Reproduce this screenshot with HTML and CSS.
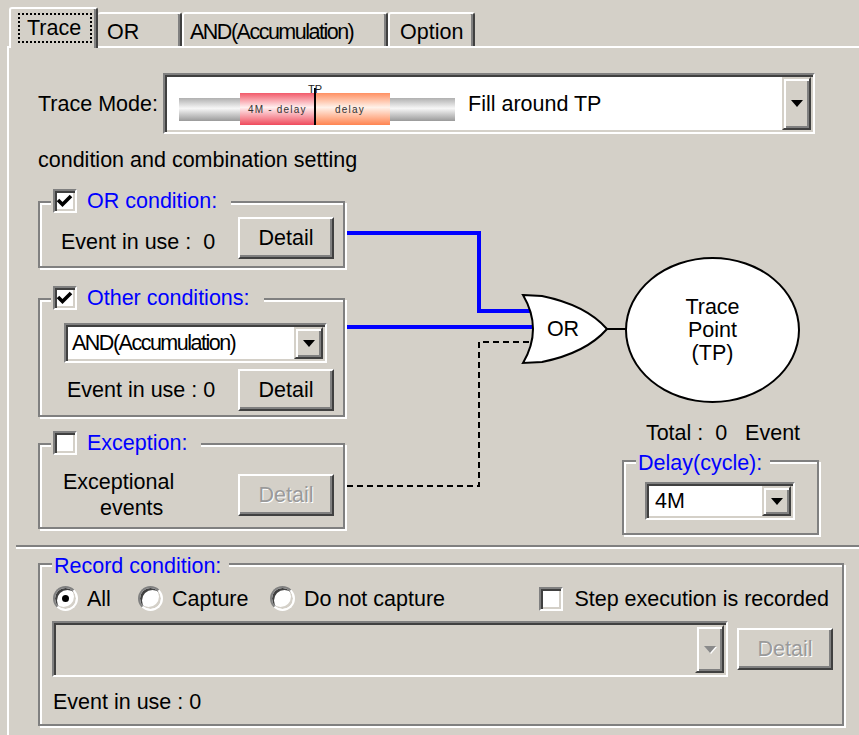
FILE: index.html
```html
<!DOCTYPE html>
<html>
<head>
<meta charset="utf-8">
<title>Trace</title>
<link rel="stylesheet" href="styles.css">
</head>
<body>
<div class="tabs">
  <div class="tab tab-active"><span class="focus">Trace</span></div>
  <div class="tab tab-or">OR</div>
  <div class="tab tab-and"><span class="tight">AND(Accumulation)</span></div>
  <div class="tab tab-opt">Option</div>
</div>
<div class="panel">
  <div class="mode-row">
    <span class="mode-label">Trace Mode:</span>
    <div class="combo mode-combo">
      <svg class="mode-img" width="276" height="44" viewBox="0 0 276 44">
        <defs>
          <linearGradient id="gGray" x1="0" y1="0" x2="0" y2="1">
            <stop offset="0" stop-color="#b0b0b0"/>
            <stop offset="0.45" stop-color="#f7f7f7"/>
            <stop offset="1" stop-color="#9a9a9a"/>
          </linearGradient>
          <linearGradient id="gRed" x1="0" y1="0" x2="0" y2="1">
            <stop offset="0" stop-color="#f25a6a"/>
            <stop offset="0.45" stop-color="#fff0f0"/>
            <stop offset="1" stop-color="#ef4a5c"/>
          </linearGradient>
          <linearGradient id="gOrg" x1="0" y1="0" x2="0" y2="1">
            <stop offset="0" stop-color="#ff9062"/>
            <stop offset="0.45" stop-color="#fff2ea"/>
            <stop offset="1" stop-color="#ff8450"/>
          </linearGradient>
        </defs>
        <rect x="0" y="16" width="61" height="23" fill="url(#gGray)"/>
        <rect x="211" y="16" width="65" height="23" fill="url(#gGray)"/>
        <rect x="61" y="11" width="75" height="32" fill="url(#gRed)"/>
        <rect x="137" y="11" width="74" height="32" fill="url(#gOrg)"/>
        <rect x="135" y="6" width="2" height="37" fill="#000"/>
        <text class="tiny-tp" x="136" y="11" text-anchor="middle">TP</text>
        <text class="tiny" x="69" y="31">4M - delay</text>
        <text class="tiny" x="156" y="31">delay</text>
      </svg>
      <span class="combo-text">Fill around TP</span>
      <span class="drop"><i class="arrow"></i></span>
    </div>
  </div>

  <div class="caption">condition and combination setting</div>

  <div class="middle">
    <div class="left-col">
      <div class="group g-or">
        <div class="gtitle">
          <span class="cb"><svg width="20" height="20" viewBox="0 0 20 20"><polyline points="3,9 7.5,13.5 16,5" fill="none" stroke="#000" stroke-width="3.6"/></svg></span>
          <span class="blue">OR condition:</span>
        </div>
        <div class="row">
          <span class="evt evt-or">Event in use :  0</span>
          <span class="btn">Detail</span>
        </div>
      </div>

      <div class="group g-other">
        <div class="gtitle">
          <span class="cb"><svg width="20" height="20" viewBox="0 0 20 20"><polyline points="3,9 7.5,13.5 16,5" fill="none" stroke="#000" stroke-width="3.6"/></svg></span>
          <span class="blue">Other conditions:</span>
        </div>
        <div class="combo small-combo">
          <span class="combo-text tight">AND(Accumulation)</span>
          <span class="drop"><i class="arrow"></i></span>
        </div>
        <div class="row row2">
          <span class="evt evt-other">Event in use : 0</span>
          <span class="btn">Detail</span>
        </div>
      </div>

      <div class="group g-exc">
        <div class="gtitle">
          <span class="cb"></span>
          <span class="blue">Exception:</span>
        </div>
        <div class="row">
          <span class="exc-text"><span class="l1">Exceptional</span><span class="l2">events</span></span>
          <span class="btn disabled">Detail</span>
        </div>
      </div>
    </div>

    <div class="right-col">
      <div class="tp">Trace<br>Point<br>(TP)</div>
      <div class="total">Total :  0   Event</div>
      <div class="group g-delay">
        <div class="gtitle text-title"><span class="blue">Delay(cycle):</span></div>
        <div class="combo delay-combo">
          <span class="combo-text">4M</span>
          <span class="drop"><i class="arrow"></i></span>
        </div>
      </div>
    </div>

    <svg class="wires" width="600" height="363" viewBox="38 172 600 363">
      <path d="M347,233 H479 V311 H532" fill="none" stroke="#0000ff" stroke-width="4"/>
      <path d="M347,327 H534" fill="none" stroke="#0000ff" stroke-width="4"/>
      <path d="M347,486 H479 V342 H530" fill="none" stroke="#000" stroke-width="2" stroke-dasharray="6 4"/>
      <path d="M607,329 H626" fill="none" stroke="#000" stroke-width="2"/>
      <path d="M523,295 L542,296 Q586,305 607,329 Q586,353 542,362 L523,363 Q543,329 523,295 Z" fill="#fff" stroke="#000" stroke-width="2"/>
      <text class="gate-text" x="563" y="336" text-anchor="middle">OR</text>
    </svg>
  </div>

  <div class="sep"></div>

  <div class="group g-rec">
    <div class="gtitle text-title"><span class="blue">Record condition:</span></div>
    <div class="radios">
      <span class="ritem r1"><span class="radio on"></span>All</span>
      <span class="ritem r2"><span class="radio"></span>Capture</span>
      <span class="ritem r3"><span class="radio"></span>Do not capture</span>
      <span class="step"><span class="cb"></span>Step execution is recorded</span>
    </div>
    <div class="rec-row">
      <div class="combo rec-combo">
        <span class="drop"><i class="arrow arrow-dis"></i></span>
      </div>
      <span class="btn disabled">Detail</span>
    </div>
    <div class="rec-evt">Event in use : 0</div>
  </div>
</div>
</body>
</html>
```

FILE: styles.css
```css
* { box-sizing: border-box; }
html, body { margin: 0; padding: 0; }
body {
  background: #d4d0c8;
  font-family: "Liberation Sans", Arial, sans-serif;
  font-size: 21.5px;
  line-height: 24px;
  color: #000;
  width: 859px;
  height: 735px;
  overflow: hidden;
}

/* tabs */
.tabs {
  display: flex;
  align-items: flex-end;
  height: 46px;
  padding-left: 9px;
  position: relative;
  z-index: 2;
}
.tab {
  height: 34px;
  border: 2px solid;
  border-bottom: 0;
  border-color: #fff #404040 #404040 #fff;
  box-shadow: inset -2px 0 0 #808080;
  border-radius: 3px 3px 0 0;
  padding-top: 4px;
  line-height: 28px;
  white-space: nowrap;
  background: #d4d0c8;
}
.tab-active {
  width: 89px;
  height: 41px;
  margin-bottom: -2px;
  padding-left: 7px;
  padding-top: 4px;
  position: relative;
  z-index: 1;
}
.focus {
  display: inline-block;
  vertical-align: top;
  height: 30px;
  border: 2px dotted #000;
  padding: 0 9px 0 7px;
  line-height: 26px;
}
.tab-or { width: 84px; padding-left: 9px; border-left: 0; }
.tab-and { width: 206px; padding-left: 6px; }
.tab-opt { width: 87px; padding-left: 10px; }
.tight { letter-spacing: -1.5px; }

/* panel */
.panel {
  margin-left: 7px;
  border-left: 2px solid #fff;
  border-top: 2px solid #fff;
  padding-left: 29px;
  height: 689px;
}

.mode-row {
  display: flex;
  align-items: center;
  margin-top: 25px;
}
.mode-label { width: 125px; }

.combo {
  display: flex;
  align-items: center;
  border: 2px solid;
  border-color: #808080 #fff #fff #808080;
  box-shadow: inset 2px 2px 0 #404040, inset -2px -2px 0 #d4d0c8;
  background: #fff;
  padding: 2px;
  white-space: nowrap;
}
.mode-combo { width: 652px; height: 61px; }
.mode-img { margin-left: 12px; align-self: flex-start; margin-top: 5px; flex: none; }
.mode-img .tiny { font-size: 10px; letter-spacing: 1.2px; fill: #333; }
.mode-img .tiny-tp { font-size: 11px; fill: #222; }
.mode-combo .combo-text { margin-left: 13px; }

.drop {
  margin-left: auto;
  width: 29px;
  flex: none;
  align-self: stretch;
  display: flex;
  align-items: center;
  justify-content: center;
  background: #d4d0c8;
  border: 2px solid;
  border-color: #d4d0c8 #404040 #404040 #d4d0c8;
  box-shadow: inset 2px 2px 0 #fff, inset -2px -2px 0 #808080;
}
.arrow {
  display: block;
  width: 0;
  height: 0;
  border-left: 6px solid transparent;
  border-right: 6px solid transparent;
  border-top: 7px solid #000;
}
.arrow-dis {
  border-top-color: #8a8a8a;
  filter: drop-shadow(1px 1px 0 #fff);
}

.caption { margin-top: 14px; }

/* middle area */
.middle {
  position: relative;
  display: flex;
  height: 363px;
}
.left-col { width: 307px; flex: none; }
.right-col { margin-left: 277px; width: 198px; flex: none; }

.group {
  position: relative;
  border: 2px solid #808080;
  box-shadow: inset 2px 2px 0 #fff, 2px 2px 0 #fff;
}
.gtitle {
  position: absolute;
  left: 11px;
  top: -14px;
  display: flex;
  align-items: center;
  gap: 10px;
  background: #d4d0c8;
  padding: 0 14px 0 2px;
  white-space: nowrap;
}
.text-title {
  left: 12px;
  top: -11px;
  padding: 0 8px 0 2px;
}
.blue { color: #0000ff; }

.cb {
  width: 24px;
  height: 24px;
  flex: none;
  display: flex;
  align-items: center;
  justify-content: center;
  border: 2px solid;
  border-color: #808080 #fff #fff #808080;
  box-shadow: inset 2px 2px 0 #404040, inset -2px -2px 0 #d4d0c8;
  background: #fff;
}

.row {
  display: flex;
  justify-content: space-between;
  align-items: center;
}
.evt { white-space: pre; }

.btn {
  width: 96px;
  height: 42px;
  flex: none;
  display: flex;
  align-items: center;
  justify-content: center;
  border: 2px solid;
  border-color: #fff #404040 #404040 #fff;
  box-shadow: inset -2px -2px 0 #808080;
  background: #d4d0c8;
}
.btn.disabled {
  color: #9a9a9a;
  text-shadow: 1px 1px 0 #fff;
}

.g-or {
  margin-top: 29px;
  height: 67px;
  padding: 14px 9px 0 21px;
}
.evt-or { padding-top: 8px; }

.g-other {
  margin-top: 30px;
  height: 119px;
  padding: 23px 9px 0 24px;
}
.small-combo { width: 263px; height: 40px; }
.small-combo .combo-text { padding-left: 4px; }
.row2 { margin-top: 6px; }
.evt-other { padding-left: 3px; }

.g-exc {
  margin-top: 26px;
  height: 86px;
  padding: 24px 9px 0 23px;
}
.exc-text { display: flex; flex-direction: column; line-height: 26px; }
.exc-text .l2 { padding-left: 37px; }

/* right column */
.tp {
  margin: 85px 0 0 3px;
  width: 175px;
  height: 146px;
  border: 2px solid #000;
  border-radius: 50%;
  background: #fff;
  display: flex;
  align-items: center;
  justify-content: center;
  text-align: center;
  line-height: 23px;
}
.total {
  margin-top: 18px;
  text-align: center;
  padding-left: 4px;
  white-space: pre;
}
.g-delay {
  margin-top: 15px;
  width: 197px;
  height: 75px;
  padding: 20px 0 0 21px;
}
.delay-combo { width: 150px; height: 38px; }
.delay-combo .combo-text { padding-left: 6px; }

.wires {
  position: absolute;
  left: 0;
  top: 0;
  pointer-events: none;
  overflow: visible;
}
.gate-text { font-size: 21.5px; fill: #000; }

/* separator */
.sep {
  height: 2px;
  background: #808080;
  box-shadow: 0 2px 0 #fff;
  margin: 10px 0 0 -22px;
}

/* record condition */
.g-rec {
  margin-top: 16px;
  width: 806px;
  height: 163px;
  padding: 21px 9px 0 13px;
}
.radios {
  display: flex;
  align-items: center;
  height: 25px;
  white-space: nowrap;
}
.ritem { display: flex; align-items: center; gap: 9px; }
.r1 { width: 85px; }
.r2 { width: 132px; }
.radio {
  position: relative;
  width: 25px;
  height: 25px;
  flex: none;
  border-radius: 50%;
  border: 2px solid;
  border-color: #808080 #fff #fff #808080;
  box-shadow: inset 2px 2px 0 #404040, inset -2px -2px 0 #d4d0c8;
  background: #fff;
}
.radio.on::after {
  content: "";
  position: absolute;
  left: 7px;
  top: 7px;
  width: 7px;
  height: 7px;
  border-radius: 50%;
  background: #000;
}
.step {
  margin-left: auto;
  margin-right: 4px;
  display: flex;
  align-items: center;
  gap: 11px;
}
.rec-row {
  margin-top: 10px;
  margin-left: -1px;
  display: flex;
  align-items: center;
  gap: 9px;
}
.rec-combo { width: 676px; height: 56px; background: #d4d0c8; }
.rec-evt { margin-top: 13px; }
```
